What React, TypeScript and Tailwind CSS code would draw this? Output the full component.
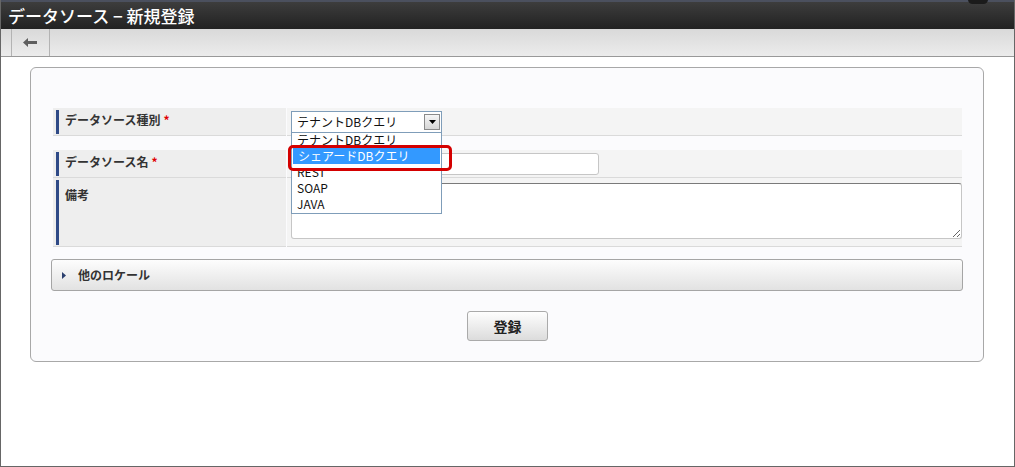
import React from "react";

function BackArrow() {
  return (
    <svg width="14" height="9" viewBox="0 0 14 9">
      <path d="M0 4.5 L5 0 L5 3 L14 3 L14 6 L5 6 L5 9 Z" fill="#5e5e5e" />
    </svg>
  );
}

function Label({ text, required, extraTop }: { text: string; required?: boolean; extraTop?: boolean }) {
  return (
    <div className="w-[233px] shrink-0 bg-[#eeeeee] border-b border-[#dadada] pl-[3px] pt-[2px] pb-[1px]">
      <div
        className={
          "h-full border-l-[3px] border-[#2f4a87] pl-[6px] text-[12px] leading-[16px] font-bold text-[#333] " +
          (extraTop ? "pt-[7px]" : "pt-[2px]")
        }
      >
        {text}
        {required && <span className="ml-[3px] text-[#e00000]">*</span>}
      </div>
    </div>
  );
}

const options = ["テナントDBクエリ", "シェアードDBクエリ", "REST", "SOAP", "JAVA"];

export default function App() {
  return (
    <div className="w-[1015px] h-[467px] flex flex-col border-x border-b border-[#666] bg-white overflow-hidden font-['Noto_Sans_CJK_JP','Liberation_Sans',sans-serif]">
      {/* title bar */}
      <div className="relative h-[29px] shrink-0 border-t-2 border-[#4b505e] bg-gradient-to-b from-[#3d3d3d] to-[#222] pl-[7px] flex items-center">
        <h1 className="text-white text-[17px] font-medium leading-none">データソース − 新規登録</h1>
        <span className="absolute right-[26px] -top-[7px] w-[20px] h-[9px] rounded-full bg-[#1b1b1b]" />
      </div>

      {/* toolbar */}
      <div className="h-[28px] shrink-0 flex border-b border-[#999] bg-gradient-to-b from-[#d9d9d9] to-[#ececec]">
        <div className="ml-[10px] w-[39px] border-x border-[#b3b3b3] flex items-center justify-center pr-[2px]">
          <BackArrow />
        </div>
      </div>

      {/* content */}
      <div className="pt-[10px] pl-[29px] pr-[30px]">
        <div className="border border-[#a8a8a8] rounded-[6px] bg-[#fbfbfd] pt-[40px] pb-[20px] pl-[20px] pr-[19px]">
          {/* row 1 */}
          <div className="flex h-[28px] mx-[2px]">
            <Label text="データソース種別" required />
            <div className="relative flex-1 ml-[1px] bg-[#f4f4f4] border-b border-[#dadada] pl-[4px] pt-[3px]">
              <div className="relative w-[151px] h-[22px] border border-[#7f9db9] bg-white pl-[5px] text-[12px] leading-[20px] text-[#111]">
                テナントDBクエリ
                <div className="absolute right-[1px] top-[2px] w-[16px] h-[16px] border border-[#8a8a8a] bg-gradient-to-b from-[#f6f6f6] to-[#d6d6d6] flex items-center justify-center">
                  <svg width="7" height="4" viewBox="0 0 7 4">
                    <path d="M0 0 L7 0 L3.5 4 Z" fill="#000" />
                  </svg>
                </div>
              </div>
              {/* open list */}
              <div className="absolute z-10 left-[4px] top-[24px] w-[151px] h-[82px] border border-[#7f9db9] bg-white overflow-hidden text-[12px] text-[#111]">
                {options.map((o, i) => (
                  <div
                    key={o}
                    className={
                      "overflow-hidden " +
                      (i === 0 ? "h-[15px] leading-[13px] pl-[5px]" : "h-[16px] leading-[16px] pl-[5px]") +
                      (i === 1 ? " mx-[1px] pl-[4px] bg-[#3399ff] text-white" : "")
                    }
                  >
                    {o}
                  </div>
                ))}
              </div>
              {/* red highlight */}
              <div className="absolute z-20 left-[1px] top-[37px] w-[164px] h-[26px] border-[3px] border-[#d40000] rounded-[5px]" />
            </div>
          </div>

          {/* row 2 */}
          <div className="flex h-[28px] mx-[2px] mt-[14px]">
            <Label text="データソース名" required />
            <div className="flex-1 ml-[1px] bg-[#f4f4f4] border-b border-[#dadada] pl-[4px] pt-[3px]">
              <div className="w-[308px] h-[22px] border border-[#c6c6c6] rounded-[3px] bg-white" />
            </div>
          </div>

          {/* row 3 */}
          <div className="flex h-[69px] mx-[2px]">
            <Label text="備考" extraTop />
            <div className="flex-1 ml-[1px] bg-[#f4f4f4] border-b border-[#dadada] pl-[4px] pt-[5px]">
              <textarea
                readOnly
                className="block w-full h-[56px] border border-[#c6c6c6] border-t-[#7a7a7a] rounded-[3px] bg-white outline-none resize-y"
              />
            </div>
          </div>

          {/* accordion */}
          <div className="mt-[12px] mr-[1px] h-[32px] border border-[#a5a5a5] rounded-[3px] bg-gradient-to-b from-[#fdfdfd] to-[#e2e2e2] flex items-center pl-[10px]">
            <svg width="4" height="7" viewBox="0 0 4 7">
              <path d="M0 0 L4 3.5 L0 7 Z" fill="#2b3f6e" />
            </svg>
            <span className="ml-[12px] text-[12px] font-bold text-[#333]">他のロケール</span>
          </div>

          {/* submit */}
          <div className="mt-[20px] flex justify-center">
            <button className="w-[81px] h-[30px] border border-[#aaa] rounded-[3px] bg-gradient-to-b from-[#fefefe] to-[#dcdcdc] text-[14px] font-bold text-[#222] leading-none">
              登録
            </button>
          </div>
        </div>
      </div>
    </div>
  );
}
